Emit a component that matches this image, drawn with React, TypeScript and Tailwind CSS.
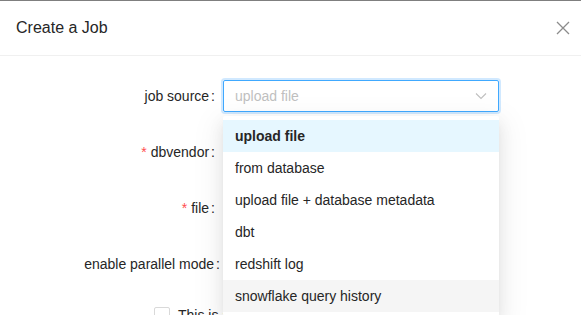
import React from "react";

const options = [
  "upload file",
  "from database",
  "upload file + database metadata",
  "dbt",
  "redshift log",
  "snowflake query history",
];

function Label({ text, required, tight }: { text: string; required?: boolean; tight?: boolean }) {
  return (
    <div
      className={`w-[223px] shrink-0 flex items-center justify-end text-[14px] text-[#262626] ${
        tight ? "pr-[3px]" : "pr-2"
      }`}
    >
      {required && <span className="mr-1 text-[#ff4d4f] text-[14px] leading-none">*</span>}
      <span>{text}</span>
      <span className="ml-0.5">:</span>
    </div>
  );
}

export default function App() {
  return (
    <div
      className="relative w-[581px] h-[315px] overflow-hidden bg-white border-t border-[#7f7f7f]"
      style={{ fontFamily: '"Liberation Sans", Arial, sans-serif' }}
    >
      {/* Header */}
      <div className="h-[55px] flex items-center justify-between pl-4 pr-[11px] border-b border-[#f0f0f0]">
        <span className="text-[16px] text-[#262626]">Create a Job</span>
        <svg width="14" height="14" viewBox="0 0 14 14" className="text-[#8c8c8c]">
          <path d="M1 1 L13 13 M13 1 L1 13" stroke="currentColor" strokeWidth="1.3" fill="none" />
        </svg>
      </div>

      {/* Form */}
      <div className="pt-6 flex flex-col gap-6">
        <div className="flex h-8">
          <Label text="job source" />
          <div className="w-[276px] h-8 flex items-center justify-between pl-[11px] pr-[11px] border border-[#40a9ff] rounded-[2px] shadow-[0_0_0_2px_rgba(24,144,255,0.2)]">
            <span className="text-[14px] text-[#bfbfbf]">upload file</span>
            <svg width="12" height="8" viewBox="0 0 12 8" className="text-[#bfbfbf]">
              <path d="M1 1.5 L6 6.5 L11 1.5" stroke="currentColor" strokeWidth="1.1" fill="none" />
            </svg>
          </div>
        </div>
        <div className="flex h-8">
          <Label text="dbvendor" required />
        </div>
        <div className="flex h-8">
          <Label text="file" required />
        </div>
        <div className="flex h-8">
          <Label text="enable parallel mode" tight />
        </div>
        <div className="flex items-start pl-[154px] h-8">
          <span className="mt-[3px] w-4 h-4 border border-[#d9d9d9] rounded-[2px] bg-white" />
          <span className="ml-2 text-[14px] text-[#262626] leading-[22px]">This is a sample job</span>
        </div>
      </div>

      {/* Dropdown */}
      <div className="absolute left-[223px] top-[115px] w-[276px] bg-white pt-1 pb-1 rounded-[2px] shadow-[0_3px_6px_-4px_rgba(0,0,0,0.12),0_6px_16px_0_rgba(0,0,0,0.08),0_9px_28px_8px_rgba(0,0,0,0.05)]">
        {options.map((o, i) => (
          <div
            key={o}
            className={`h-8 flex items-center px-3 text-[14px] text-[#262626] ${
              i === 0 ? "bg-[#e6f7ff] font-bold" : i === 5 ? "bg-[#f5f5f5]" : ""
            }`}
          >
            {o}
          </div>
        ))}
      </div>
    </div>
  );
}
